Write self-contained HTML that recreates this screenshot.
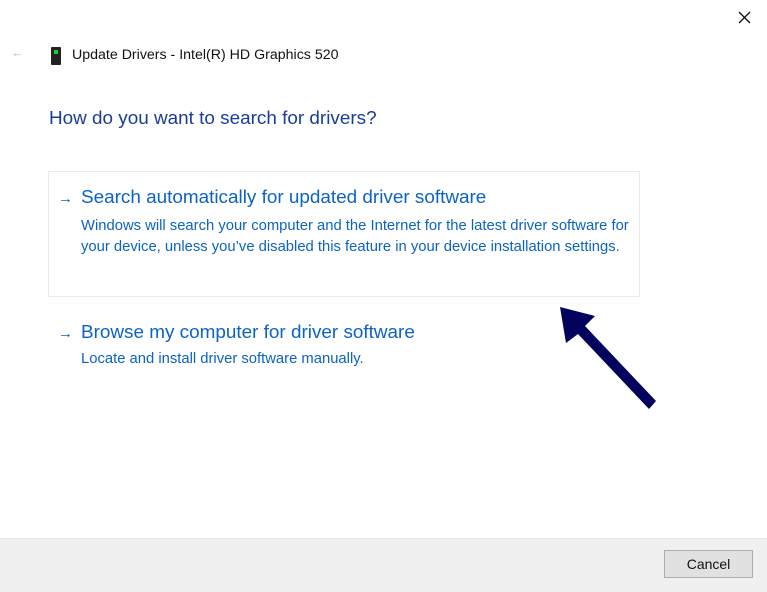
<!DOCTYPE html>
<html><head><meta charset="utf-8"><style>
body{margin:0;width:767px;height:591px;background:#fff;position:relative;overflow:hidden;font-family:"Segoe UI","Liberation Sans",sans-serif}
.a{position:absolute;white-space:nowrap}
</style></head><body>
<svg class="a" style="left:738px;top:11px" width="13" height="13"><path d="M1 1L12 12M12 1L1 12" stroke="#111" stroke-width="1.3"/></svg>
<div class="a" style="left:11px;top:45px;font-size:13px;color:#bbb">←</div>
<div class="a" style="left:51px;top:47px;width:10px;height:18px;background:#222;border-radius:1px"><div style="position:absolute;left:3px;top:3px;width:4px;height:4px;background:#2c2"></div></div>
<div class="a" style="left:72px;top:47px;font-size:14.2px;color:#111">Update Drivers - Intel(R) HD Graphics 520</div>
<div class="a" style="left:49px;top:108px;font-size:18.9px;color:#1a3d9a">How do you want to search for drivers?</div>
<div class="a" style="left:48px;top:171px;width:590px;height:124px;border:1px solid #ebebeb"></div>
<div class="a" style="left:58px;top:190px;font-size:15px;color:#0b63c4">→</div>
<div class="a" style="left:81px;top:187px;font-size:18.9px;color:#0b63c4">Search automatically for updated driver software</div>
<div class="a" style="left:81px;top:216px;font-size:14.8px;line-height:21px;color:#0b63c4">Windows will search your computer and the Internet for the latest driver software for<br>your device, unless you’ve disabled this feature in your device installation settings.</div>
<div class="a" style="left:58px;top:325px;font-size:15px;color:#0b63c4">→</div>
<div class="a" style="left:81px;top:322px;font-size:18.9px;color:#0b63c4">Browse my computer for driver software</div>
<div class="a" style="left:81px;top:351px;font-size:14.8px;color:#0b63c4">Locate and install driver software manually.</div>
<svg class="a" style="left:0;top:0" width="767" height="591"><polygon points="560,307 595,316 585,326 656,401 649,409 578,334 566,343" fill="#03035e"/></svg>
<div class="a" style="left:0;top:538px;width:767px;height:53px;background:#f0f0f0;border-top:1px solid #e6e6e6"></div>
<div class="a" style="left:664px;top:550px;width:87px;height:26px;background:#e1e1e1;border:1px solid #adadad;font-size:14px;text-align:center;line-height:26px;color:#111">Cancel</div>
</body></html>
